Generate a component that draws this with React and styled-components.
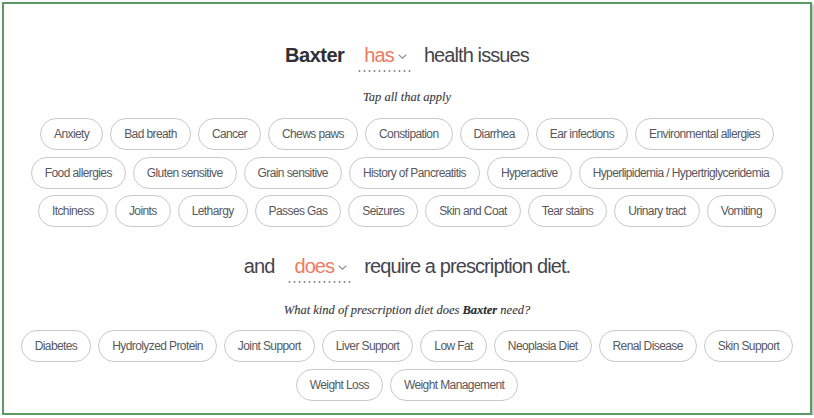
import React from "react";
import styled, { createGlobalStyle } from "styled-components";

const GlobalStyle = createGlobalStyle`
  html, body {
    margin: 0;
    padding: 0;
    background: #ffffff;
  }
  body {
    font-family: "Liberation Sans", Arial, sans-serif;
  }
`;

const Frame = styled.div`
  box-sizing: border-box;
  margin: 2px 0 0 2px;
  width: 810px;
  height: 413px;
  border: 2px solid #5b9a63;
  box-shadow: 2px 2px 2px rgba(0, 0, 0, 0.22);
  padding-top: 39px;
  display: flex;
  flex-direction: column;
  align-items: center;
`;

const Heading = styled.div`
  display: flex;
  align-items: flex-start;
  gap: 12px;
  font-size: 20px;
  line-height: 24px;
  letter-spacing: -0.9px;
  color: #45454b;
  margin-top: ${(p) => p.$top || 0}px;
`;

const Name = styled.span`
  font-weight: 700;
  color: #2f2f35;
  letter-spacing: -0.5px;
`;

const Select = styled.span`
  display: inline-flex;
  align-items: center;
  gap: 4px;
  padding: 0 5px 5px 8px;
  color: #ef7a62;
  background-image: radial-gradient(circle, #8a8a8a 0.9px, transparent 1.2px);
  background-size: 5px 2px;
  background-repeat: repeat-x;
  background-position: 1px bottom;
`;

const Chevron = () => (
  <svg width="9" height="5" viewBox="0 0 9 5" style={{ marginTop: 2 }}>
    <polyline
      points="0.6,0.6 4.5,4.2 8.4,0.6"
      fill="none"
      stroke="#8a8a8a"
      strokeWidth="1.1"
    />
  </svg>
);

const Hint = styled.p`
  margin: ${(p) => p.$top}px 0 0;
  font-family: "Liberation Serif", "Times New Roman", serif;
  font-style: italic;
  font-size: 12.5px;
  line-height: 16px;
  color: #3a3a40;
  -webkit-text-stroke: 0.12px #3a3a40;

  b {
    color: #2a2a30;
  }
`;

const Chips = styled.div`
  display: flex;
  flex-wrap: wrap;
  justify-content: center;
  gap: 6.5px 7px;
  width: 800px;
  margin-top: ${(p) => p.$top}px;
`;

const Chip = styled.button`
  box-sizing: border-box;
  height: 32px;
  padding: 0 13px;
  border: 1px solid #c9c9c9;
  border-radius: 16px;
  background: #fff;
  font-family: "Liberation Sans", Arial, sans-serif;
  font-size: 12px;
  letter-spacing: -0.6px;
  color: #58585d;
  cursor: pointer;
  white-space: nowrap;
`;

const issues = [
  "Anxiety",
  "Bad breath",
  "Cancer",
  "Chews paws",
  "Constipation",
  "Diarrhea",
  "Ear infections",
  "Environmental allergies",
  "Food allergies",
  "Gluten sensitive",
  "Grain sensitive",
  "History of Pancreatitis",
  "Hyperactive",
  "Hyperlipidemia / Hypertriglyceridemia",
  "Itchiness",
  "Joints",
  "Lethargy",
  "Passes Gas",
  "Seizures",
  "Skin and Coat",
  "Tear stains",
  "Urinary tract",
  "Vomiting",
];

const diets = [
  "Diabetes",
  "Hydrolyzed Protein",
  "Joint Support",
  "Liver Support",
  "Low Fat",
  "Neoplasia Diet",
  "Renal Disease",
  "Skin Support",
  "Weight Loss",
  "Weight Management",
];

const App = () => {
  return (
    <>
      <GlobalStyle />
      <Frame>
        <Heading>
          <Name>Baxter</Name>
          <Select>
            has <Chevron />
          </Select>
          <span>health issues</span>
        </Heading>
        <Hint $top={17}>Tap all that apply</Hint>
        <Chips $top={13}>
          {issues.map((item) => (
            <Chip key={item}>{item}</Chip>
          ))}
        </Chips>
        <Heading $top={27}>
          <span>and</span>
          <Select>
            does <Chevron />
          </Select>
          <span>require a prescription diet.</span>
        </Heading>
        <Hint $top={19}>
          What kind of prescription diet does <b>Baxter</b> need?
        </Hint>
        <Chips $top={12}>
          {diets.map((item) => (
            <Chip key={item}>{item}</Chip>
          ))}
        </Chips>
      </Frame>
    </>
  );
};

export default App;
